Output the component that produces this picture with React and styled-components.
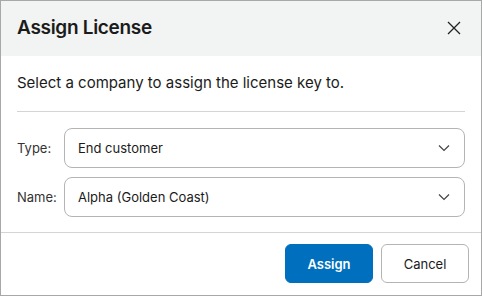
import React from 'react'
import styled, { createGlobalStyle } from 'styled-components'

const Global = createGlobalStyle`
    html, body { margin: 0; padding: 0; background: #fff; }
    body { font-family: Inter, "Noto Sans", sans-serif; color: #1b1b1b; }
`

const Dialog = styled.div`
    width: 482px;
    height: 296px;
    box-sizing: border-box;
    border: 1px solid #a8a8a8;
    display: flex;
    flex-direction: column;
    background: #fff;
`

const Header = styled.div`
    height: 55px;
    background: #f2f3f3;
    display: flex;
    align-items: center;
    justify-content: space-between;
    padding: 0 16px 0 16px;
    box-sizing: border-box;
`

const Title = styled.h1`
    margin: 0;
    font-size: 19px;
    font-weight: 600;
    letter-spacing: -0.3px;
    padding-bottom: 3px;
`

const CloseButton = styled.button`
    border: none;
    background: none;
    padding: 0;
    width: 24px;
    height: 24px;
    display: flex;
    align-items: center;
    justify-content: center;
    color: #222;
    margin-right: -1px;
    margin-bottom: 1px;
`

const Body = styled.div`
    flex: 1;
    padding: 0 16px;
    display: flex;
    flex-direction: column;
`

const Intro = styled.p`
    margin: 0;
    font-size: 15px;
    height: 54px;
    line-height: 54px;
    border-bottom: 1px solid #d4d4d4;
    padding-bottom: 1px;
`

const Rows = styled.div`
    display: flex;
    flex-direction: column;
    gap: 9px;
    padding-top: 16px;
`

const Row = styled.div`
    display: flex;
    align-items: center;
`

const Label = styled.label`
    width: 47px;
    font-size: 13px;
    color: #333;
`

const Select = styled.div`
    flex: 1;
    height: 40px;
    box-sizing: border-box;
    border: 1px solid #b4b4b4;
    border-radius: 8px;
    display: flex;
    align-items: center;
    justify-content: space-between;
    padding: 0 13px 0 13px;
    font-size: 13px;
    color: #1b1b1b;
`

const Footer = styled.div`
    border-top: 1px solid #d4d4d4;
    height: 63px;
    box-sizing: border-box;
    display: flex;
    justify-content: flex-end;
    align-items: flex-start;
    gap: 8px;
    padding: 11px 12px 0 0;
`

const Button = styled.button`
    width: 88px;
    height: 39px;
    border-radius: 6px;
    font-family: inherit;
    font-size: 13px;
    font-weight: ${p => (p.$primary ? 600 : 400)};
    background: ${p => (p.$primary ? '#0070be' : '#fff')};
    color: ${p => (p.$primary ? '#fff' : '#1b1b1b')};
    border: 1px solid ${p => (p.$primary ? '#0070be' : '#b4b4b4')};
    padding: 0;
`

const Chevron = () => (
    <svg width="14" height="14" viewBox="0 0 14 14" fill="none" stroke="#444" strokeWidth="1.2">
        <path d="M2 4.5 L7 9.5 L12 4.5" />
    </svg>
)

function Field({ label, value }) {
    return (
        <Row>
            <Label>{label}</Label>
            <Select>
                <span>{value}</span>
                <Chevron />
            </Select>
        </Row>
    )
}

export default function App() {
    return (
        <>
            <Global />
            <Dialog>
                <Header>
                    <Title>Assign License</Title>
                    <CloseButton aria-label="Close">
                        <svg width="14" height="14" viewBox="0 0 14 14" stroke="#222" strokeWidth="1.3">
                            <path d="M1 1 L13 13 M13 1 L1 13" />
                        </svg>
                    </CloseButton>
                </Header>
                <Body>
                    <Intro>Select a company to assign the license key to.</Intro>
                    <Rows>
                        <Field label="Type:" value="End customer" />
                        <Field label="Name:" value="Alpha (Golden Coast)" />
                    </Rows>
                </Body>
                <Footer>
                    <Button $primary>Assign</Button>
                    <Button>Cancel</Button>
                </Footer>
            </Dialog>
        </>
    )
}
